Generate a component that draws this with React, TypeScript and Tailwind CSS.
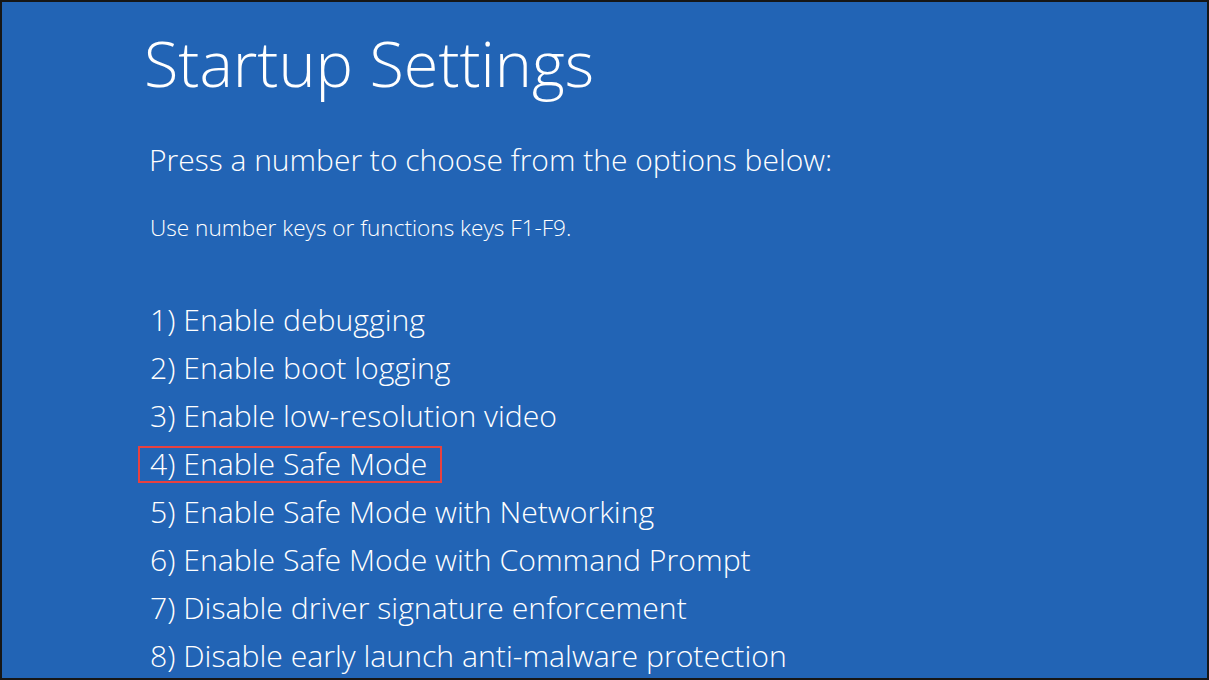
export default function App() {
  const items = [
    "1) Enable debugging",
    "2) Enable boot logging",
    "3) Enable low-resolution video",
    "4) Enable Safe Mode",
    "5) Enable Safe Mode with Networking",
    "6) Enable Safe Mode with Command Prompt",
    "7) Disable driver signature enforcement",
    "8) Disable early launch anti-malware protection",
  ];
  return (
    <div
      className="w-[1209px] h-[680px] overflow-hidden border-2 border-[#161616] bg-[#2264b5] text-white"
      style={{ fontFamily: '"Open Sans", "Noto Sans", sans-serif' }}
    >
      <div className="flex flex-col pl-[144px] pt-[21px]">
        <div className="-ml-[2px] text-[63px] leading-[80px] font-light">Startup Settings</div>
        <div className="mt-[37px] pl-[3px] text-[30px] leading-[40px] font-light">
          Press a number to choose from the options below:
        </div>
        <div className="mt-[33px] pl-[4px] text-[22.6px] leading-[30px] font-light">
          Use number keys or functions keys F1-F9.
        </div>
        <div className="mt-[53px] pl-[4px] flex flex-col">
          {items.map((t, i) => (
            <div key={i} className="relative text-[30.2px] leading-[48px] font-light whitespace-nowrap">
              {i === 3 && (
                <div className="absolute left-[-12px] top-[6px] w-[304px] h-[37px] border-2 border-[#e8413f]" />
              )}
              {t}
            </div>
          ))}
        </div>
      </div>
    </div>
  );
}
